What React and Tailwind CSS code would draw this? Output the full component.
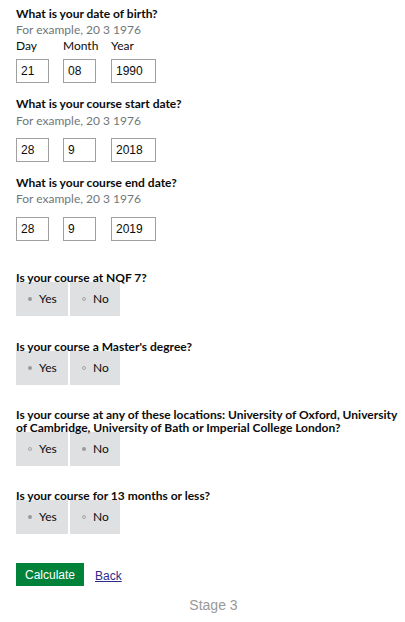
import React from "react";

const gds = { fontFamily: "Lato, 'Liberation Sans', sans-serif" };

function DateFields({ day, month, year }) {
  return (
    <div className="flex text-[12px] text-[#0b0c0c]" style={{ fontFamily: "'Liberation Sans', Arial, sans-serif" }}>
      <div className="h-[24px] w-[33px] border border-[#a0a0a0] pl-[4px] leading-[22px]">{day}</div>
      <div className="ml-[14px] h-[24px] w-[33px] border border-[#a0a0a0] pl-[4px] leading-[22px]">{month}</div>
      <div className="ml-[15px] h-[24px] w-[45px] border border-[#a0a0a0] pl-[4px] leading-[22px]">{year}</div>
    </div>
  );
}

function Heading({ children, className = "" }) {
  return (
    <h2 className={`relative z-10 text-[12px] font-bold leading-[13px] text-[#0b0c0c] ${className}`} style={gds}>
      {children}
    </h2>
  );
}

function Hint({ children, className = "" }) {
  return (
    <p className={`text-[12px] leading-[16px] text-[#6f777b] ${className}`} style={gds}>
      {children}
    </p>
  );
}

function Dot({ on }) {
  return on ? (
    <span className="h-[4px] w-[4px] rounded-full bg-[#9a9a9a]" />
  ) : (
    <span className="h-[4px] w-[4px] rounded-full border border-[#a5a5a5]" />
  );
}

function YesNo({ answer }) {
  return (
    <div className="-mt-[2px] flex gap-[2px] text-[12px] text-[#0b0c0c]" style={{ fontFamily: "Lato, sans-serif" }}>
      <div className="flex h-[34px] w-[52px] items-center bg-[#dee0e2] pl-[12px]">
        <Dot on={answer === "yes"} />
        <span className="ml-[7px]">Yes</span>
      </div>
      <div className="flex h-[34px] w-[50px] items-center bg-[#dee0e2] pl-[12px]">
        <Dot on={answer === "no"} />
        <span className="ml-[7px]">No</span>
      </div>
    </div>
  );
}

export default function App() {
  return (
    <div className="min-h-[622px] w-[405px] bg-white pl-4 pr-[3px] pt-[7px]">
      {/* Date of birth */}
      <Heading>What is your date of birth?</Heading>
      <Hint className="mt-[2px]">For example, 20 3 1976</Hint>
      <div className="flex text-[12px] leading-[16px] text-[#0b0c0c]" style={gds}>
        <span className="w-[47px]">Day</span>
        <span className="w-[48px]">Month</span>
        <span>Year</span>
      </div>
      <div className="mt-[5px]">
        <DateFields day="21" month="08" year="1990" />
      </div>

      {/* Start date */}
      <Heading className="mt-[14px]">What is your course start date?</Heading>
      <Hint className="mt-[3px]">For example, 20 3 1976</Hint>
      <div className="mt-[9px]">
        <DateFields day="28" month="9" year="2018" />
      </div>

      {/* End date */}
      <Heading className="mt-[14px]">What is your course end date?</Heading>
      <Hint className="mt-[2px]">For example, 20 3 1976</Hint>
      <div className="mt-[10px]">
        <DateFields day="28" month="9" year="2019" />
      </div>

      {/* Yes / no questions */}
      <Heading className="mt-[30px]">Is your course at NQF 7?</Heading>
      <YesNo answer="yes" />

      <Heading className="mt-[24px]">Is your course a Master's degree?</Heading>
      <YesNo answer="yes" />

      <Heading className="mt-[23px]">
        Is your course at any of these locations: University of Oxford, University of Cambridge, University of Bath or Imperial College London?
      </Heading>
      <YesNo answer="no" />

      <Heading className="mt-[23px]">Is your course for 13 months or less?</Heading>
      <YesNo answer="yes" />

      <div className="mt-[29px] flex items-center" style={{ fontFamily: "'Liberation Sans', Arial, sans-serif" }}>
        <button className="h-[23px] w-[68px] bg-[#00823b] text-[12px] text-white">Calculate</button>
        <a href="#" className="ml-[11px] mt-[3px] text-[12px] text-[#2b2b8c] underline">
          Back
        </a>
      </div>

      <p className="mt-[11px] pl-[22px] pr-[13px] text-center text-[14px] leading-[16px] text-[#999999]" style={{ fontFamily: "'Liberation Sans', Arial, sans-serif" }}>
        Stage 3
      </p>
    </div>
  );
}
